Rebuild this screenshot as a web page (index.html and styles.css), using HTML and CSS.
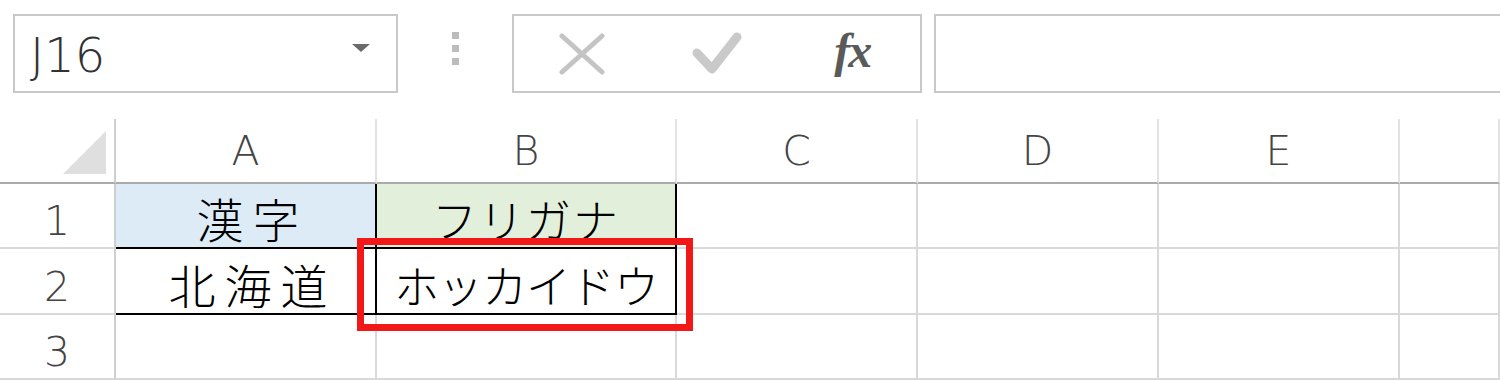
FILE: index.html
```html
<!DOCTYPE html>
<html lang="ja">

<head>
  <meta charset="UTF-8">
  <title>フリガナ</title>
  <link rel="stylesheet" href="styles.css">
</head>

<body>

  <div class="toolbar">
    <div class="namebox">
      <span class="ref">J16</span>
      <span class="caret"></span>
    </div>
    <div class="grip"><i></i><i></i><i></i></div>
    <div class="fbuttons">
      <span class="fbtn">
        <svg width="46" height="42" viewBox="0 0 46 42">
          <path d="M3 3 L43 39 M43 3 L3 39" stroke="#c4c4c4" stroke-width="5" stroke-linecap="round" fill="none" />
        </svg>
      </span>
      <span class="fbtn">
        <svg width="50" height="44" viewBox="0 0 50 44">
          <path d="M5 21 L20 37 L45 5" stroke="#c9c9c9" stroke-width="9" stroke-linecap="round" stroke-linejoin="round" fill="none" />
        </svg>
      </span>
      <span class="fbtn fx">fx</span>
    </div>
    <div class="fbar"></div>
  </div>

  <div class="sheet">
    <!-- column headers -->
    <div class="corner"><span class="tri"></span></div>
    <div class="colhead">A</div>
    <div class="colhead">B</div>
    <div class="colhead">C</div>
    <div class="colhead">D</div>
    <div class="colhead">E</div>
    <div class="colhead"></div>

    <!-- row 1 -->
    <div class="rowhead">1</div>
    <div class="cell boxed kanji fill-blue">漢字</div>
    <div class="cell boxed kana fill-green">フリガナ</div>
    <div class="cell"></div>
    <div class="cell"></div>
    <div class="cell"></div>
    <div class="cell"></div>

    <!-- row 2 -->
    <div class="rowhead">2</div>
    <div class="cell boxed kanji">北海道</div>
    <div class="cell boxed kana tight">ホッカイドウ<span class="highlight"></span></div>
    <div class="cell"></div>
    <div class="cell"></div>
    <div class="cell"></div>
    <div class="cell"></div>

    <!-- row 3 -->
    <div class="rowhead">3</div>
    <div class="cell"></div>
    <div class="cell"></div>
    <div class="cell"></div>
    <div class="cell"></div>
    <div class="cell"></div>
    <div class="cell"></div>
  </div>

</body>

</html>
```

FILE: styles.css
```css
body {
  margin: 0;
  background-color: white;
  font-family: "Noto Sans", "Open Sans", sans-serif;
  overflow: hidden;
}

* {
  box-sizing: border-box;
}

/* formula bar row */

.toolbar {
  display: flex;
  align-items: stretch;
  height: 119px;
  padding: 14px 0 26px 13px;
}

.namebox {
  width: 385px;
  border: 2px solid #c8c8c8;
  display: flex;
  align-items: center;
  justify-content: space-between;
  padding: 0 26px 0 15px;
}

.ref {
  font-family: "DejaVu Sans", sans-serif;
  font-weight: 200;
  font-size: 48px;
  color: #333;
  line-height: 1;
  margin-top: 2px;
}

.caret {
  width: 0;
  height: 0;
  border-left: 9px solid transparent;
  border-right: 9px solid transparent;
  border-top: 8px solid #6a6a6a;
  margin-bottom: 12px;
}

.grip {
  width: 114px;
  display: flex;
  flex-direction: column;
  align-items: center;
  justify-content: center;
  gap: 6px;
  padding-bottom: 10px;
}

.grip i {
  display: block;
  width: 7px;
  height: 7px;
  background-color: #bcbcbc;
}

.fbuttons {
  width: 410px;
  border: 2px solid #c8c8c8;
  display: grid;
  grid-template-columns: repeat(3, 1fr);
  align-items: center;
  justify-items: center;
}

.fbtn {
  display: flex;
  align-items: center;
  justify-content: center;
}

.fbtn.fx {
  font-family: "Liberation Serif", serif;
  font-style: italic;
  font-weight: bold;
  font-size: 48px;
  color: #5a5a5a;
  letter-spacing: -2px;
  line-height: 1;
  margin-top: -6px;
}

.fbar {
  flex: 1;
  margin-left: 12px;
  margin-right: -4px;
  border: 2px solid #c8c8c8;
}

/* grid */

.sheet {
  display: grid;
  grid-template-columns: 116px 261px 300px 241px 241px 241px 1fr;
  grid-template-rows: 65px 65px 66px 65px;
}

.corner,
.colhead {
  border-right: 2px solid #e2e2e2;
  border-bottom: 2px solid #ababab;
}

.corner {
  position: relative;
  border-right-color: #cfcfcf;
}

.tri {
  position: absolute;
  right: 8px;
  bottom: 8px;
  width: 43px;
  height: 43px;
  background-color: #dfdfdf;
  clip-path: polygon(100% 0, 100% 100%, 0 100%);
}

.colhead,
.rowhead {
  display: flex;
  align-items: center;
  justify-content: center;
  font-family: "DejaVu Sans", sans-serif;
  font-weight: 200;
  font-size: 41px;
  color: #444;
  line-height: 1;
}

.colhead {
  padding-top: 2px;
}

.rowhead {
  border-right: 2px solid #cfcfcf;
  border-bottom: 2px solid #d9d9d9;
  padding-top: 12px;
}

.cell {
  position: relative;
  border-right: 2px solid #d9d9d9;
  border-bottom: 2px solid #d9d9d9;
  display: flex;
  align-items: flex-end;
  justify-content: center;
  font-family: "Noto Sans CJK JP", sans-serif;
  font-weight: 300;
  color: #000;
  line-height: 1;
  white-space: nowrap;
}

.cell.boxed {
  border-right-color: #000;
  border-bottom-color: #000;
}

.kanji {
  font-size: 47px;
  letter-spacing: 9px;
  padding-left: 14px;
  padding-bottom: 6px;
}

.kana {
  font-size: 45px;
  letter-spacing: 2px;
  padding-bottom: 6px;
}

.kana.tight {
  letter-spacing: -1px;
}

.fill-blue {
  background-color: #ddebf7;
}

.fill-green {
  background-color: #e2efda;
}

.highlight {
  position: absolute;
  left: -20px;
  top: -11px;
  right: -18px;
  bottom: -18px;
  border: 7px solid #f21818;
  z-index: 2;
}
```
